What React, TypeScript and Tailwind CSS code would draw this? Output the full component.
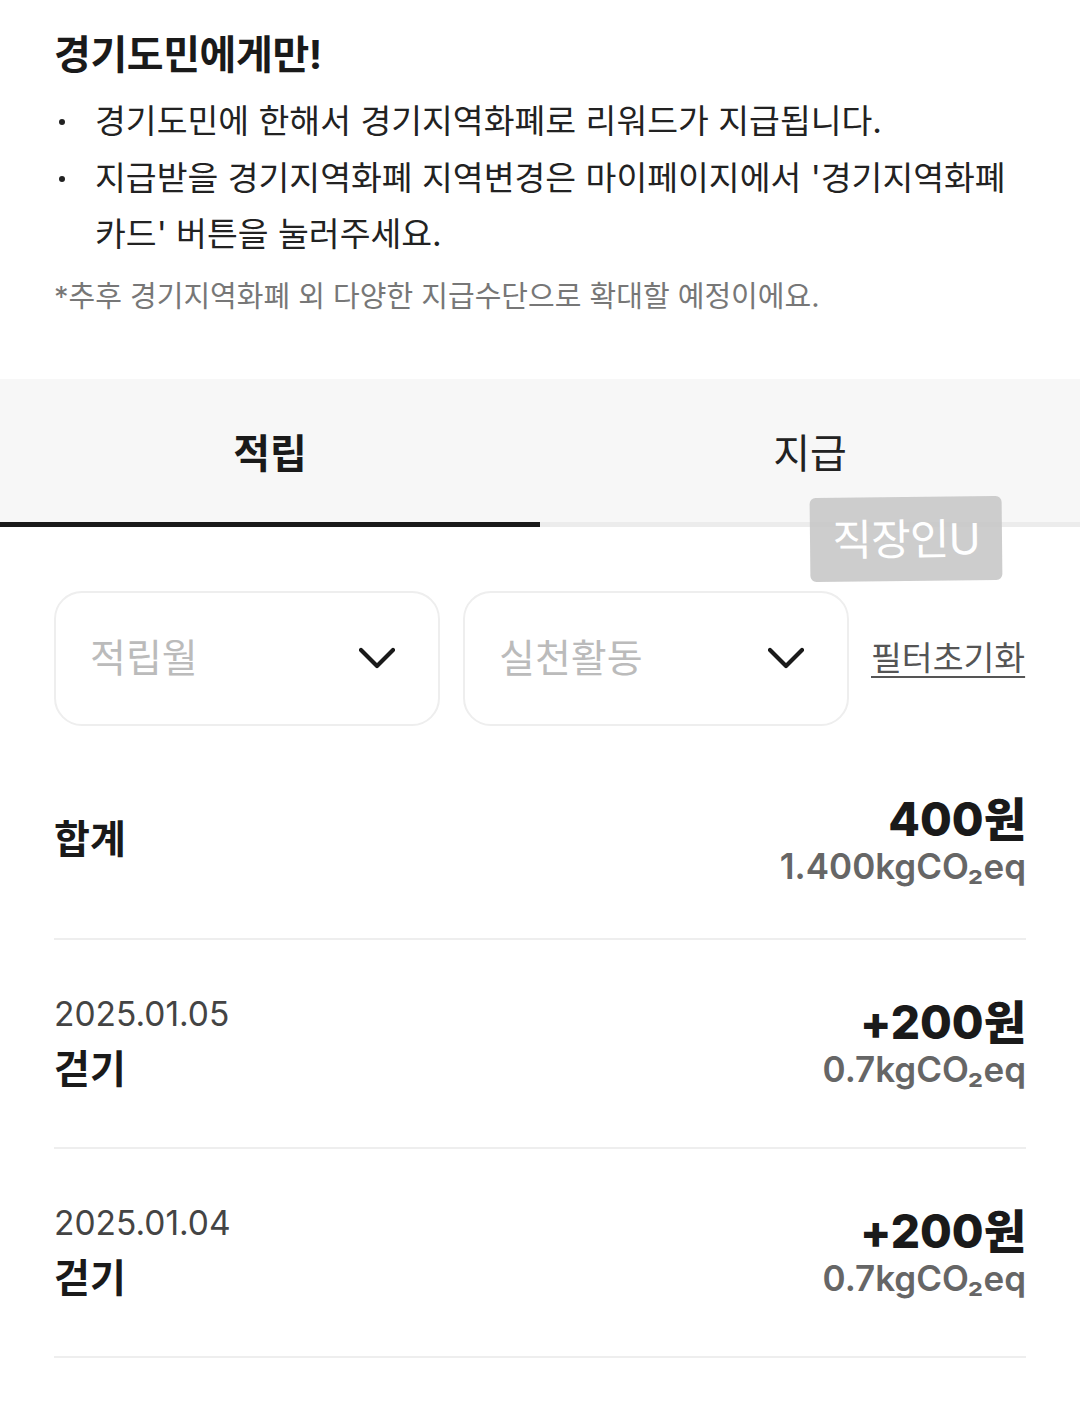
import React from "react";

function Chevron() {
  return (
    <svg width="36" height="22" viewBox="0 0 36 22" fill="none">
      <polyline points="2,3 18,19 34,3" stroke="#1a1a1a" strokeWidth="4.2" strokeLinecap="round" strokeLinejoin="round" />
    </svg>
  );
}

function Amount({ won, co2 }: { won: string; co2: string }) {
  return (
    <div className="flex flex-col items-end">
      <div className="text-[46px] leading-[52px] font-extrabold text-[#1a1a1a]">{won}</div>
      <div className="text-[35px] leading-[42px] font-semibold text-[#666666]">{co2}</div>
    </div>
  );
}

export default function App() {
  const items = [
    { date: "2025.01.05", name: "걷기", won: "+200원", co2: "0.7kgCO₂eq" },
    { date: "2025.01.04", name: "걷기", won: "+200원", co2: "0.7kgCO₂eq" },
  ];
  return (
    <div className="relative w-[1080px] min-h-[1404px] bg-white font-[Inter,'Noto_Sans_CJK_KR',sans-serif] text-[#222222]">
      {/* Notice */}
      <div className="px-[54px] pt-[30px]">
        <h1 className="text-[40px] leading-[50px] font-bold text-[#1a1a1a] tracking-[-0.01em]">경기도민에게만!</h1>
        <ul className="mt-[13px] text-[33.5px] leading-[56.5px] text-[#222222]">
          <li className="flex">
            <span className="w-[41px] shrink-0 flex items-start pt-[26px]">
              <span className="ml-[5px] w-[6px] h-[6px] rounded-full bg-[#222222]" />
            </span>
            <span>경기도민에 한해서 경기지역화폐로 리워드가 지급됩니다.</span>
          </li>
          <li className="flex">
            <span className="w-[41px] shrink-0 flex items-start pt-[26px]">
              <span className="ml-[5px] w-[6px] h-[6px] rounded-full bg-[#222222]" />
            </span>
            <span>지급받을 경기지역화폐 지역변경은 마이페이지에서 '경기지역화폐 카드' 버튼을 눌러주세요.</span>
          </li>
        </ul>
        <p className="mt-[14px] text-[29px] leading-[40px] text-[#777777]">*추후 경기지역화폐 외 다양한 지급수단으로 확대할 예정이에요.</p>
      </div>

      {/* Tabs */}
      <div className="mt-[62px] bg-[#f7f7f7]">
        <div className="flex h-[143px]">
          <div className="flex-1 flex items-center justify-center pt-[8px] text-[40px] font-bold text-[#1a1a1a]">적립</div>
          <div className="flex-1 flex items-center justify-center pt-[8px] text-[40px] text-[#222222]">지급</div>
        </div>
        <div className="flex h-[5px]">
          <div className="flex-1 bg-[#1a1a1a]" />
          <div className="flex-1 bg-[#ececec]" />
        </div>
      </div>

      {/* Filters */}
      <div className="px-[54px]">
        <div className="mt-[64px] flex items-center">
          <div className="shrink-0 w-[386px] h-[135px] rounded-[28px] border-2 border-[#eeeeee] flex items-center justify-between pl-[34px] pr-[43px]">
            <span className="text-[39px] text-[#bbbbbb]">적립월</span>
            <Chevron />
          </div>
          <div className="shrink-0 ml-[23px] w-[386px] h-[135px] rounded-[28px] border-2 border-[#eeeeee] flex items-center justify-between pl-[34px] pr-[43px]">
            <span className="text-[39px] text-[#bbbbbb]">실천활동</span>
            <Chevron />
          </div>
          <button className="shrink-0 whitespace-nowrap ml-[22px] text-[33.5px] text-[#555555] underline underline-offset-[6px] decoration-[2px]">필터초기화</button>
        </div>

        {/* Summary */}
        <div className="mt-[16px] h-[198px] flex items-center justify-between border-b-2 border-[#eeeeee]">
          <div className="text-[39px] font-bold text-[#1a1a1a]">합계</div>
          <Amount won="400원" co2="1.400kgCO₂eq" />
        </div>

        {items.map((it, i) => (
          <div key={i} className="h-[209px] flex items-center justify-between border-b-2 border-[#eeeeee]">
            <div className="flex flex-col">
              <div className="text-[33.5px] leading-[52px] text-[#444444]">{it.date}</div>
              <div className="text-[39px] leading-[58px] font-bold text-[#1a1a1a]">{it.name}</div>
            </div>
            <Amount won={it.won} co2={it.co2} />
          </div>
        ))}
      </div>

      {/* Watermark overlay */}
      <div className="absolute left-[810px] top-[497px] w-[192px] h-[84px] rounded-[6px] bg-[#c8c8c8]/90 flex items-center justify-center rotate-[-0.6deg]">
        <span className="text-[43px] text-white tracking-[-0.02em]">직장인U</span>
      </div>
    </div>
  );
}
